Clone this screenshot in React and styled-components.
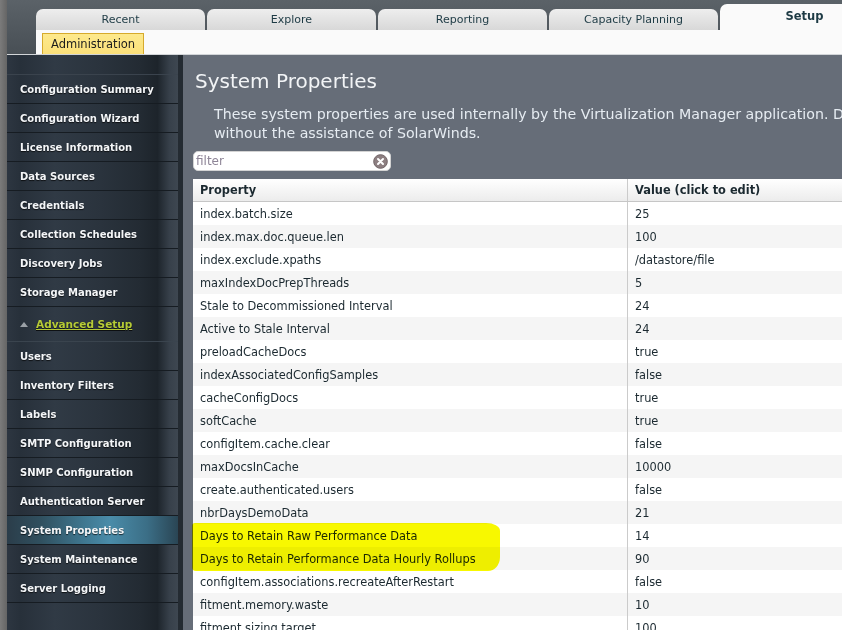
import React from 'react'
import styled, { createGlobalStyle } from 'styled-components'

const GlobalStyle = createGlobalStyle`
  html, body {
    margin: 0;
    padding: 0;
    height: 630px;
    overflow: hidden;
    background: #666d78;
  }
  body {
    font-family: "DejaVu Sans", Verdana, sans-serif;
  }
`

const Page = styled.div`
  display: flex;
  width: 1100px;
  height: 630px;
`

const EdgeStrip = styled.div`
  width: 7px;
  flex-shrink: 0;
  background: linear-gradient(to right, #7b7b7b, #656565);
`

const Main = styled.div`
  flex: 1;
  display: flex;
  flex-direction: column;
  min-width: 0;
`

const Header = styled.div`
  display: flex;
  flex-direction: column;
  padding-left: 29px;
  background: linear-gradient(#5b6268, #484f55);
`

const TabRow = styled.div`
  height: 30px;
  display: flex;
  align-items: flex-end;
  gap: 2px;
`

const Tab = styled.div`
  width: 169px;
  flex-shrink: 0;
  box-sizing: border-box;
  height: ${p => (p.$active ? 26 : 21)}px;
  padding-top: ${p => (p.$active ? 5 : 0)}px;
  border-radius: 7px 7px 0 0;
  background: ${p => (p.$active ? '#fafafa' : 'linear-gradient(#eeeeee, #d8d8d8)')};
  color: #1d3a44;
  font-size: ${p => (p.$active ? '11.5px' : '11px')};
  font-weight: ${p => (p.$active ? 'bold' : 'normal')};
  line-height: 14px;
  display: flex;
  justify-content: center;
  align-items: ${p => (p.$active ? 'flex-start' : 'center')};
`

const SubBar = styled.div`
  height: 24px;
  box-sizing: border-box;
  background: #fafafa;
  padding: 3px 6px 0;
  display: flex;
  align-items: flex-start;
`

const AdminButton = styled.div`
  height: 21px;
  box-sizing: border-box;
  padding: 0 8px;
  display: flex;
  align-items: center;
  font-size: 11.5px;
  color: #1c1c1c;
  background: linear-gradient(#fde98c, #fbe07a);
  border: 1px solid #d6aa2c;
  border-bottom: none;
`

const Body = styled.div`
  flex: 1;
  display: flex;
  border-top: 1px solid #d2d5d8;
  min-height: 0;
`

const Sidebar = styled.div`
  width: 171px;
  flex-shrink: 0;
  border-right: 5px solid #242b32;
  background: linear-gradient(
    to right,
    #2d3641 0%,
    #27303a 8%,
    #303a45 28%,
    #2a333d 55%,
    #232b33 78%,
    #1d242b 88%,
    #37404a 95%,
    #3e4751 100%
  );
`

const SideTop = styled.div`
  height: 20px;
  box-sizing: border-box;
  border-bottom: 1px solid #3a434d;
`

const SideItem = styled.div`
  height: ${p => (p.$tall ? 35 : 29)}px;
  box-sizing: border-box;
  padding-left: 13px;
  display: flex;
  align-items: center;
  gap: 8px;
  border-bottom: 1px solid ${p => (p.$tall ? '#3a444e' : '#161c22')};
  font-size: 10px;
  font-weight: bold;
  color: #f4f6f8;
  text-shadow: 0 1px 1px rgba(0, 0, 0, 0.7);
  background: ${p =>
    p.$active
      ? 'linear-gradient(to right, #2b3d4a 0%, #30505f 20%, #3f7790 45%, #4a8ca9 60%, #3b6e86 82%, #2a4554 100%)'
      : 'transparent'};
`

const SectionLink = styled.span`
  color: #b6ca36;
  text-decoration: underline;
  font-size: 10.5px;
`

const Arrow = styled.span`
  width: 0;
  height: 0;
  border-left: 4px solid transparent;
  border-right: 4px solid transparent;
  border-bottom: 5px solid #9aa0a6;
`

const Content = styled.div`
  flex: 1;
  min-width: 0;
  padding: 0 10px;
  background: #666d78;
  overflow: hidden;
`

const Title = styled.h1`
  margin: 14px 0 0 2px;
  font-size: 20px;
  line-height: 24px;
  font-weight: normal;
  color: #f2f4f6;
`

const Description = styled.p`
  margin: 12px 0 0;
  padding-left: 21px;
  font-size: 14.2px;
  line-height: 19px;
  color: #e6ecf2;
  white-space: nowrap;
`

const FilterBox = styled.div`
  margin-top: 8px;
  width: 198px;
  height: 20px;
  box-sizing: border-box;
  border-radius: 5px;
  border: 1px solid #d3d3d3;
  background: #fff;
  display: flex;
  align-items: center;
  padding: 0 2px 0 2px;
`

const FilterInput = styled.input`
  flex: 1;
  min-width: 0;
  border: none;
  outline: none;
  background: transparent;
  padding: 0;
  font-family: "DejaVu Sans", Verdana, sans-serif;
  font-size: 12px;
  color: #333;
  &::placeholder {
    color: #8e8597;
  }
`

const Table = styled.div`
  position: relative;
  margin-top: 8px;
  width: 900px;
  background: #fff;
`

const Row = styled.div`
  display: grid;
  grid-template-columns: 434px 1fr;
  height: 23px;
  box-sizing: border-box;
  background: ${p => (p.$odd ? '#f5f5f5' : '#ffffff')};
`

const HeadRow = styled(Row)`
  background: linear-gradient(#ffffff, #ececec);
  border-bottom: 1px solid #c6c6c6;
`

const Cell = styled.div`
  padding: 0 7px;
  display: flex;
  align-items: center;
  font-size: 11.4px;
  font-weight: ${p => (p.$head ? 'bold' : 'normal')};
  color: #1b2930;
  white-space: nowrap;
  border-left: ${p => (p.$value ? '1px solid #cbcbcb' : 'none')};
`

const Highlight = styled.div`
  position: absolute;
  left: -1px;
  top: 344px;
  width: 308px;
  height: 48px;
  background: #f8f800;
  mix-blend-mode: multiply;
  border-radius: 3px 14px 12px 4px / 3px 8px 14px 4px;
  pointer-events: none;
`

const tabs = ['Recent', 'Explore', 'Reporting', 'Capacity Planning', 'Setup']

const menuTop = [
  'Configuration Summary',
  'Configuration Wizard',
  'License Information',
  'Data Sources',
  'Credentials',
  'Collection Schedules',
  'Discovery Jobs',
  'Storage Manager',
]

const menuAdvanced = [
  'Users',
  'Inventory Filters',
  'Labels',
  'SMTP Configuration',
  'SNMP Configuration',
  'Authentication Server',
  'System Properties',
  'System Maintenance',
  'Server Logging',
]

const properties = [
  ['index.batch.size', '25'],
  ['index.max.doc.queue.len', '100'],
  ['index.exclude.xpaths', '/datastore/file'],
  ['maxIndexDocPrepThreads', '5'],
  ['Stale to Decommissioned Interval', '24'],
  ['Active to Stale Interval', '24'],
  ['preloadCacheDocs', 'true'],
  ['indexAssociatedConfigSamples', 'false'],
  ['cacheConfigDocs', 'true'],
  ['softCache', 'true'],
  ['configItem.cache.clear', 'false'],
  ['maxDocsInCache', '10000'],
  ['create.authenticated.users', 'false'],
  ['nbrDaysDemoData', '21'],
  ['Days to Retain Raw Performance Data', '14'],
  ['Days to Retain Performance Data Hourly Rollups', '90'],
  ['configItem.associations.recreateAfterRestart', 'false'],
  ['fitment.memory.waste', '10'],
  ['fitment.sizing.target', '100'],
]

const ClearIcon = () => (
  <svg width="15" height="15" viewBox="0 0 15 15">
    <circle cx="7.5" cy="7.5" r="6.8" fill="#8d7f81" stroke="#6f6264" strokeWidth="1" />
    <path d="M5 5 L10 10 M10 5 L5 10" stroke="#fff" strokeWidth="2" strokeLinecap="round" />
  </svg>
)

const App = () => {
  return (
    <>
      <GlobalStyle />
      <Page>
        <EdgeStrip />
        <Main>
          <Header>
            <TabRow>
              {tabs.map(t => (
                <Tab key={t} $active={t === 'Setup'}>
                  {t}
                </Tab>
              ))}
            </TabRow>
            <SubBar>
              <AdminButton>Administration</AdminButton>
            </SubBar>
          </Header>
          <Body>
            <Sidebar>
              <SideTop />
              {menuTop.map(m => (
                <SideItem key={m}>{m}</SideItem>
              ))}
              <SideItem $tall>
                <Arrow />
                <SectionLink>Advanced Setup</SectionLink>
              </SideItem>
              {menuAdvanced.map(m => (
                <SideItem key={m} $active={m === 'System Properties'}>
                  {m}
                </SideItem>
              ))}
            </Sidebar>
            <Content>
              <Title>System Properties</Title>
              <Description>
                These system properties are used internally by the Virtualization Manager application. Do not
                modify them
                <br />
                without the assistance of SolarWinds.
              </Description>
              <FilterBox>
                <FilterInput placeholder="filter" />
                <ClearIcon />
              </FilterBox>
              <Table>
                <HeadRow>
                  <Cell $head>Property</Cell>
                  <Cell $head $value>
                    Value (click to edit)
                  </Cell>
                </HeadRow>
                {properties.map(([name, value], i) => (
                  <Row key={name} $odd={i % 2 === 1}>
                    <Cell>{name}</Cell>
                    <Cell $value>{value}</Cell>
                  </Row>
                ))}
                <Highlight />
              </Table>
            </Content>
          </Body>
        </Main>
      </Page>
    </>
  )
}

export default App
